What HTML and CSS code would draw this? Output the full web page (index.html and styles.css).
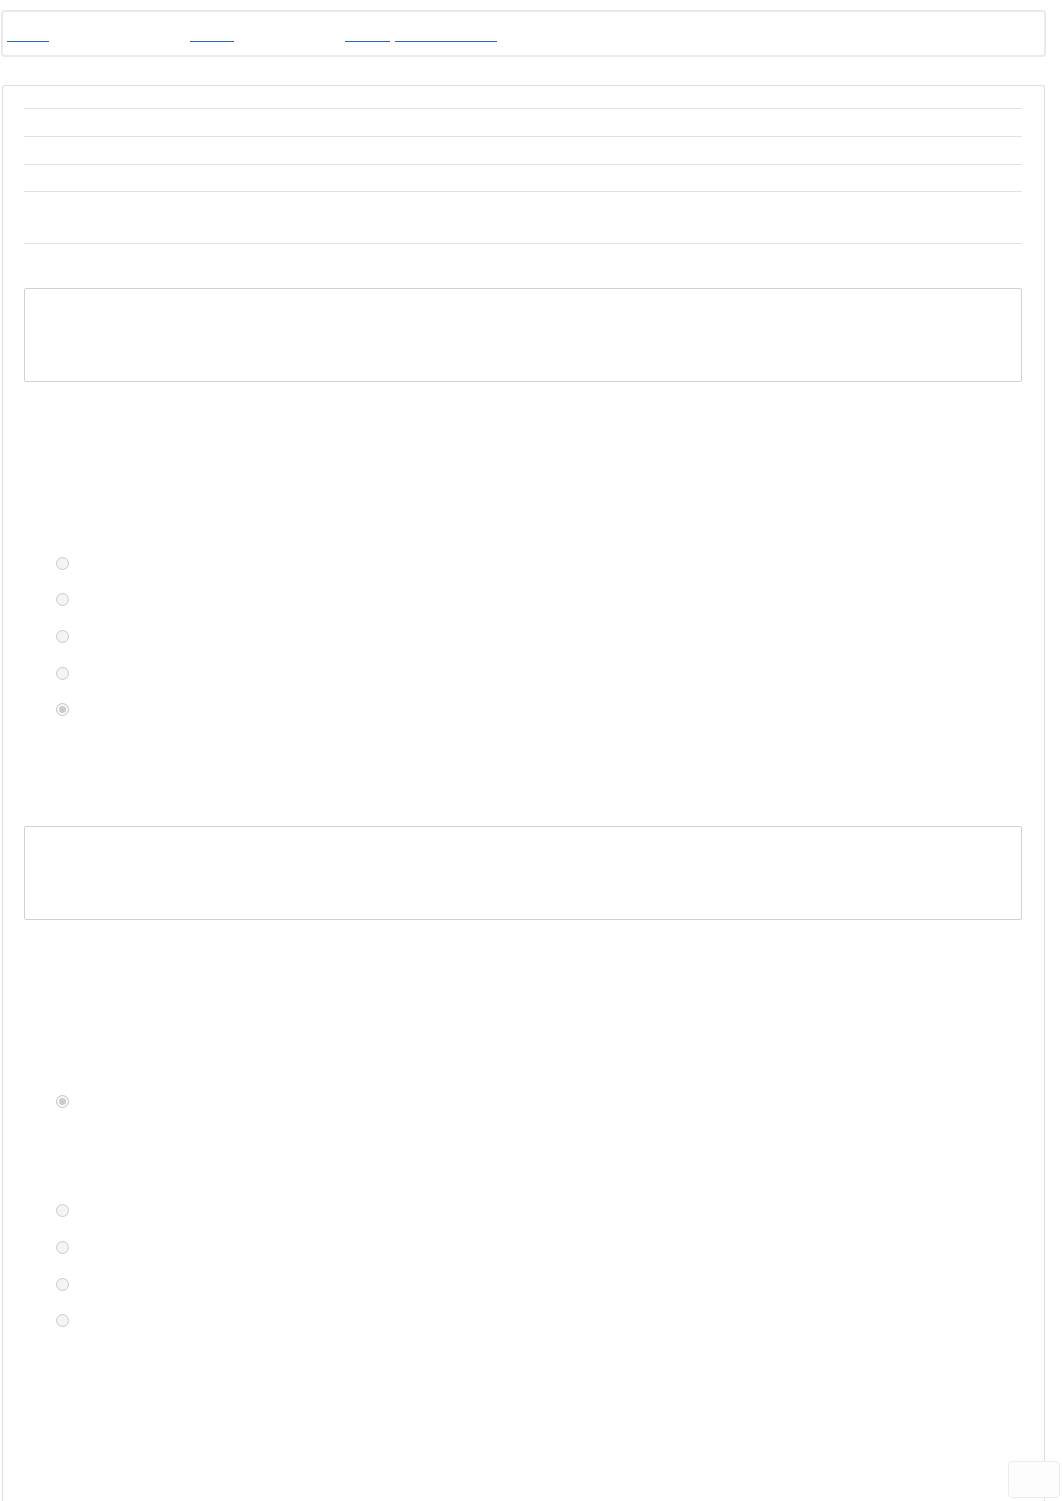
FILE: index.html
```html
<!DOCTYPE html>
<html lang="en">
<head>
    <meta charset="UTF-8">
    <title>Form</title>
    <link rel="stylesheet" href="styles.css">
</head>
<body>
<div id="nav">
    <a href="#" class="link l1"></a>
    <a href="#" class="link l2"></a>
    <a href="#" class="link l3"></a>
    <a href="#" class="link l4"></a>
</div>
<div id="panel">
    <div class="rows">
        <div class="row r1"></div>
        <div class="row r1"></div>
        <div class="row r2"></div>
        <div class="row r3"></div>
    </div>
    <div class="box first"></div>
    <ul class="opts">
        <li><input type="radio" name="q1" disabled></li>
        <li><input type="radio" name="q1" disabled></li>
        <li><input type="radio" name="q1" disabled></li>
        <li><input type="radio" name="q1" disabled></li>
        <li><input type="radio" name="q1" disabled checked></li>
    </ul>
    <div class="box second"></div>
    <ul class="opts">
        <li><input type="radio" name="q2" disabled checked></li>
    </ul>
    <ul class="opts last">
        <li><input type="radio" name="q3" disabled></li>
        <li><input type="radio" name="q3" disabled></li>
        <li><input type="radio" name="q3" disabled></li>
        <li><input type="radio" name="q3" disabled></li>
    </ul>
</div>
<div id="float"></div>
</body>
</html>
```

FILE: styles.css
```css
*{
    margin: 0;
    padding: 0;
    box-sizing: border-box;
}
body{
    font-family: "Liberation Sans", Arial, sans-serif;
    background: #fff;
}
#nav{
    display: flex;
    margin: 10px 16px 0 1px;
    height: 47px;
    border: solid 2px #e8eaec;
    border-radius: 4px;
    padding: 11px 0 0 4px;
}
#nav .link{
    display: block;
    height: 19px;
    border-bottom: solid 1px #2368b8;
}
#nav .l1{
    width: 42px;
}
#nav .l2{
    width: 44px;
    margin-left: 141px;
}
#nav .l3{
    width: 45px;
    margin-left: 111px;
}
#nav .l4{
    width: 102px;
    margin-left: 5px;
}
#panel{
    margin: 28px 17px 0 2px;
    border: solid 1px #dedede;
    border-bottom: none;
    border-radius: 3px 3px 0 0;
    padding: 22px 22px 300px 21px;
}
.rows{
    border-bottom: solid 1px #e2e2e2;
}
.row{
    border-top: solid 1px #e2e2e2;
}
.r1{
    height: 28px;
}
.r2{
    height: 27px;
}
.r3{
    height: 52px;
}
.box{
    height: 94px;
    border: solid 1px #cdd2d7;
    border-radius: 2px;
}
.box.first{
    margin-top: 44px;
}
.box.second{
    margin-top: 98px;
}
.opts{
    list-style: none;
    margin-top: 163px;
}
.opts.last{
    margin-top: 73px;
}
.opts li{
    height: 36.6px;
    display: flex;
    align-items: center;
    padding-left: 32px;
}
.opts input{
    appearance: none;
    -webkit-appearance: none;
    margin: 0;
    width: 13px;
    height: 13px;
    border: solid 1px #c9c9c9;
    border-radius: 50%;
    background: #f4f4f4;
}
.opts input:checked{
    background: #cbcbcb;
    box-shadow: inset 0 0 0 2px #fbfbfb;
}
#float{
    position: fixed;
    right: 2px;
    bottom: 3px;
    width: 52px;
    height: 37px;
    border: solid 1px #ececec;
    border-radius: 4px;
    background: #fdfdfd;
}
```
